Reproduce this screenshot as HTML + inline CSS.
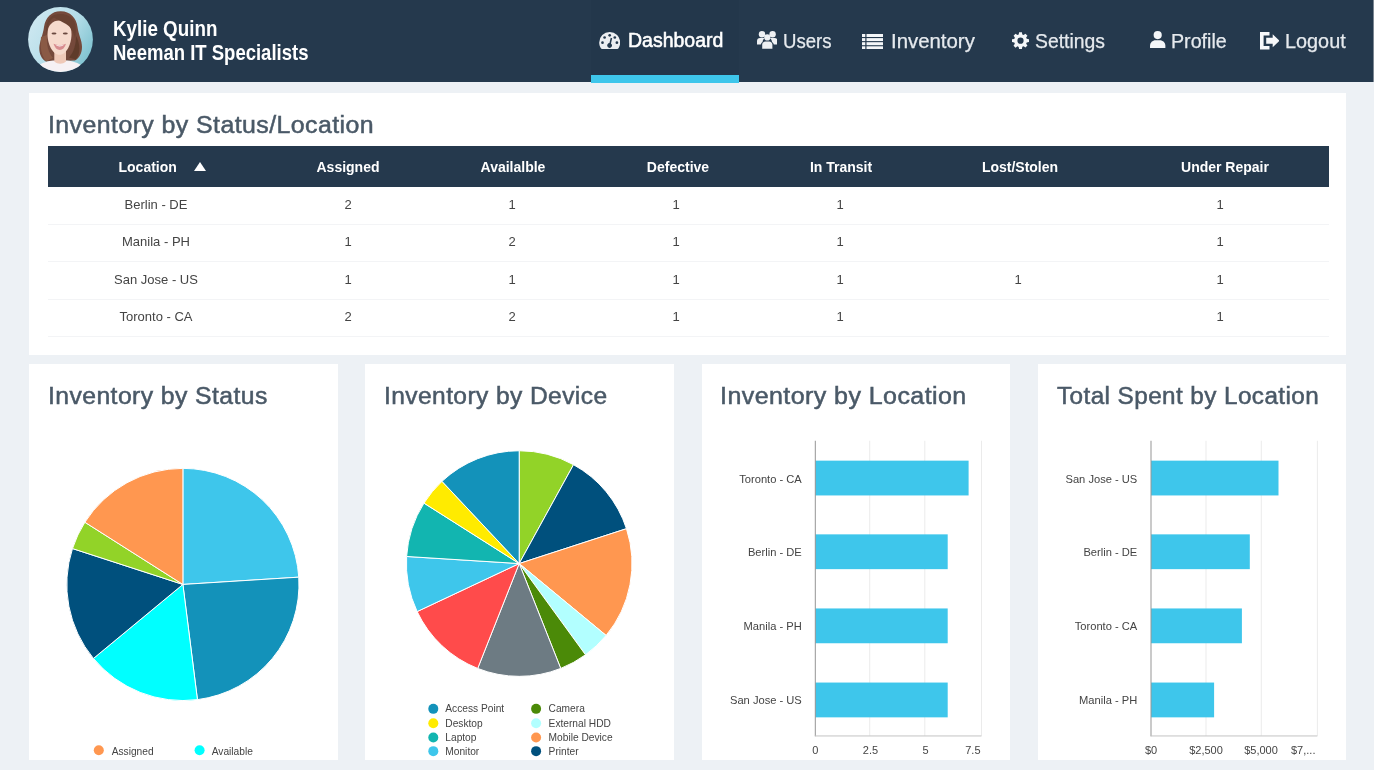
<!DOCTYPE html>
<html lang="en">
<head>
<meta charset="utf-8">
<title>Dashboard - Inventory</title>
<style>
*{box-sizing:border-box;margin:0;padding:0}
html,body{width:1374px;height:770px;overflow:hidden}
body{background:#edf1f5;font-family:"Liberation Sans",Arial,sans-serif;position:relative;color:#444}
#wrap{position:absolute;left:0;top:0;width:1374px;height:770px;will-change:transform}
.abs{position:absolute}
header{position:absolute;left:0;top:0;width:1374px;height:81.5px;background:#25394d}
.avatar{position:absolute;left:28.3px;top:7.1px;width:65px;height:65px}
.uname{position:absolute;left:113.2px;top:16.7px;font-size:21.6px;line-height:24px;font-weight:bold;color:#fff;white-space:nowrap}
.uname span{display:block;transform-origin:0 50%}
nav a{position:absolute;top:0;height:81px;color:#e6eaee;font-size:20.8px;line-height:24px;text-decoration:none;white-space:nowrap}
nav a span{position:absolute;top:28.75px;transform-origin:0 50%;-webkit-text-stroke:0.25px #e6eaee}
nav a svg{position:absolute}
nav a.active{color:#fff;background:#23374b}
nav a.active span{-webkit-text-stroke:0.55px #fff}
.underline{position:absolute;left:591px;top:75px;width:148px;height:8px;background:#3ec6eb}
.card{position:absolute;background:#fff}
.card h2{position:absolute;left:19px;font-size:23.3px;line-height:28px;font-weight:normal;color:#4a5967;white-space:nowrap;letter-spacing:0.4px;-webkit-text-stroke:0.5px #4a5967;transform-origin:0 50%}
table{position:absolute;left:19px;top:53.5px;width:1281px;border-collapse:collapse;table-layout:fixed}
th{background:#25394d;color:#fff;font-size:14px;font-weight:bold;height:41px;text-align:center;vertical-align:middle;white-space:nowrap}
td:last-child{padding-right:5px}
tr.r3 td{height:38px}
td{font-size:13px;color:#444;height:37px;padding-bottom:2px;text-align:center;vertical-align:middle;border-bottom:1px solid #f3f4f6}
.sort{display:inline-block;width:0;height:0;border-left:6.5px solid transparent;border-right:6.5px solid transparent;border-bottom:9px solid #fff;margin-left:17.5px;position:relative;top:-1px}
svg text{font-family:"Liberation Sans",Arial,sans-serif}
</style>
</head>
<body>
<div id="wrap">
<header>
  <svg class="avatar" viewBox="0 0 65 65">
    <defs>
      <clipPath id="av"><circle cx="32.5" cy="32.5" r="32.4"/></clipPath>
      <linearGradient id="avbg" x1="0" y1="0.2" x2="1" y2="0.8">
        <stop offset="0" stop-color="#cfe8f1"/><stop offset="0.55" stop-color="#b3dde8"/><stop offset="1" stop-color="#79bfcd"/>
      </linearGradient>
      <filter id="avb" x="-10%" y="-10%" width="120%" height="120%"><feGaussianBlur stdDeviation="0.55"/></filter>
    </defs>
    <g clip-path="url(#av)">
      <rect width="65" height="65" fill="url(#avbg)"/>
      <g filter="url(#avb)">
        <path d="M33 4.300C24 4 17.500 10 16 20C15 28 11.500 35 11.300 41C11.200 47 13.500 52 18 54.500L47 53.500C51.500 51 54 46 54 40C54 33 50.500 28 49.500 20C48.300 10.500 42 4.600 33 4.300Z" fill="#74493a"/>
        <path d="M13 30C12 40 13 48 18 54.500L25 51C20 45 18.500 38 19 28Z" fill="#8a5a45"/>
        <path d="M5 66C7 59 15 54.500 25 53.500L39 53.500C49 54.500 57 59 60 66Z" fill="#f6f1f4"/>
        <path d="M26.300 44H38V54.500C34.500 57.500 29.800 57.500 26.300 54.500Z" fill="#efc9b8"/>
        <path d="M19.500 27C19.500 18 24.500 13.500 31.500 13.500C38.500 13.500 43.500 18 43.500 27C43.500 37 38.500 47.800 31.500 47.800C24.500 47.800 19.500 37 19.500 27Z" fill="#f6dacd"/>
        <path d="M26 10.500C21.500 13 19.300 19 19 28C17.500 23 17.500 14.500 23.500 9.500C30 5.500 40 6.500 45 12.500C48 16.500 48.500 24 47 31C45.500 25 43 20 38 17C33.500 14.500 29.500 12.500 26 10.500Z" fill="#6a4232"/>
        <path d="M48 29C48 37 46 45 41 50.500L48 52.500C52.500 47 52.500 37 48 29Z" fill="#5f3b2c"/>
        <ellipse cx="26" cy="26.500" rx="2.500" ry="0.900" fill="#6b4a40"/>
        <ellipse cx="37.300" cy="26.500" rx="2.500" ry="0.900" fill="#6b4a40"/>
        <path d="M25.500 36.800Q31.800 39.500 38 36.800Q36 43 31.800 43Q27.500 43 25.500 36.800Z" fill="#d88c8f"/>
        <path d="M27 37.500Q31.800 39.300 36.500 37.500Q31.800 41.500 27 37.500Z" fill="#fffafa"/>
      </g>
    </g>
  </svg>
  <div class="uname"><span style="transform:scaleX(0.870)">Kylie Quinn</span><span style="transform:scaleX(0.857)">Neeman IT Specialists</span></div>
  <nav>
    <a class="active" style="left:591px;width:148px">
      <svg style="left:7.8px;top:32px" width="21.4" height="17" viewBox="0 0 21 17"><path fill="#eceef1" d="M10.5 0A10.5 10.5 0 0 0 0 10.5c0 2 .55 3.900 1.550 5.500.3.600.8 1 1.450 1h15c.65 0 1.150-.4 1.450-1A10.400 10.400 0 0 0 21 10.500 10.500 10.500 0 0 0 10.500 0Z"/><g fill="#25394d"><circle cx="3.300" cy="10.700" r="1.350"/><circle cx="5.400" cy="5.500" r="1.350"/><circle cx="10.500" cy="3.300" r="1.350"/><circle cx="15.600" cy="5.500" r="1.350"/><circle cx="17.700" cy="10.700" r="1.350"/><path d="M11.500 5.800l1.500.4-1.250 5.300a2.400 2.400 0 1 1-1.500-.4z"/></g></svg>
      <span style="left:37.2px;top:28.1px;font-size:19.8px;transform:scaleX(0.985)">Dashboard</span>
    </a>
    <a style="left:750px;width:90px">
      <svg style="left:6.900px;top:30.900px" width="20.600" height="17.700" viewBox="0 0 20.600 17.700"><g fill="#eef0f3"><circle cx="5" cy="3.300" r="3.200"/><circle cx="15.600" cy="3.300" r="3.200"/><path d="M0 13.500V9.900C0 8.100 1.200 6.900 3 6.900h3.300c.5 0 .9.100 1.300.3-1.300 1-2 2.400-2.100 4.100-.9.400-1.500 1.200-1.700 2.200z"/><path d="M20.600 13.500V9.900c0-1.800-1.200-3-3-3h-3.300c-.5 0-.9.100-1.300.3 1.300 1 2 2.400 2.100 4.100.9.400 1.500 1.200 1.700 2.200z"/><circle cx="10.300" cy="6.400" r="3.100"/><path d="M5.200 17.700v-4c0-1.900 1.400-3.300 3.300-3.300h3.600c1.900 0 3.300 1.400 3.300 3.300v4z"/></g></svg>
      <span style="left:33px;transform:scaleX(0.895)">Users</span>
    </a>
    <a style="left:856px;width:125px">
      <svg style="left:6.300px;top:33.500px" width="21" height="15.400" viewBox="0 0 21 15.400"><g fill="#f4f6f8"><rect x="0" y="0" width="3.300" height="3"/><rect x="4.500" y="0" width="16.500" height="3"/><rect x="0" y="4.100" width="3.300" height="3"/><rect x="4.500" y="4.100" width="16.500" height="3"/><rect x="0" y="8.200" width="3.300" height="3"/><rect x="4.500" y="8.200" width="16.500" height="3"/><rect x="0" y="12.300" width="3.300" height="3"/><rect x="4.500" y="12.300" width="16.500" height="3"/></g></svg>
      <span style="left:34.600px;transform:scaleX(0.98)">Inventory</span>
    </a>
    <a style="left:1005px;width:110px">
      <svg style="left:7.200px;top:32px" width="17" height="17.400" viewBox="0 0 17 17"><path fill="#f4f6f8" fill-rule="evenodd" d="M7.100 0h2.800l.4 2.200 1.300.55 1.850-1.300 2 2-1.300 1.850.55 1.300 2.300.4v2.800l-2.300.4-.55 1.300 1.300 1.850-2 2-1.850-1.300-1.300.55L9.900 17H7.100l-.4-2.300-1.300-.55-1.850 1.300-2-2 1.300-1.850-.55-1.300L0 9.900V7.100l2.300-.4.55-1.300-1.300-1.850 2-2 1.850 1.300 1.300-.55zM8.500 5.400a3.100 3.100 0 1 0 0 6.200 3.100 3.100 0 0 0 0-6.200z"/></svg>
      <span style="left:29.900px;transform:scaleX(0.931)">Settings</span>
    </a>
    <a style="left:1143px;width:90px">
      <svg style="left:7.400px;top:30.800px" width="15.400" height="17.400" viewBox="0 0 15 17"><g fill="#f4f6f8"><circle cx="7.500" cy="4" r="4"/><path d="M0 17v-2.600C0 11.300 2.400 9 5.500 9h4c3.100 0 5.500 2.300 5.500 5.400V17z"/></g></svg>
      <span style="left:28.300px;transform:scaleX(0.946)">Profile</span>
    </a>
    <a style="left:1252px;width:100px">
      <svg style="left:7.500px;top:32px" width="19.400" height="17.500" viewBox="0 0 19.400 17.500"><g fill="#f7f8fa"><path d="M0 0h9.500v3.500H3.600v10.500h5.900v3.500H0z"/><path d="M12.700 2.300l6.700 6.450-6.700 6.450v-3.500H6.200V5.800h6.500z"/></g></svg>
      <span style="left:32.800px;transform:scaleX(0.954)">Logout</span>
    </a>
  </nav>
  <div class="underline"></div>
  <div class="abs" style="left:1372.7px;top:0;width:1.3px;height:81.5px;background:#7c8792"></div>
</header>

<section class="card" style="left:29px;top:92.500px;width:1317px;height:262px">
  <h2 style="top:18.5px;left:19.1px;transform:scaleX(1.0686)">Inventory by Status/Location</h2>
  <table>
    <colgroup><col style="width:216px"><col style="width:168px"><col style="width:160px"><col style="width:168px"><col style="width:160px"><col style="width:196px"><col style="width:213px"></colgroup>
    <thead><tr><th style="text-align:left;padding-left:70.5px">Location<i class="sort"></i></th><th>Assigned</th><th><span style="position:relative;left:1px">Availalble</span></th><th><span style="position:relative;left:2px">Defective</span></th><th><span style="position:relative;left:1px">In Transit</span></th><th><span style="position:relative;left:2px">Lost/Stolen</span></th><th><span style="position:relative;left:2.5px">Under Repair</span></th></tr></thead>
    <tbody>
      <tr><td>Berlin - DE</td><td>2</td><td>1</td><td>1</td><td>1</td><td></td><td>1</td></tr>
      <tr><td>Manila - PH</td><td>1</td><td>2</td><td>1</td><td>1</td><td></td><td>1</td></tr>
      <tr class="r3"><td>San Jose - US</td><td>1</td><td>1</td><td>1</td><td>1</td><td>1</td><td>1</td></tr>
      <tr><td>Toronto - CA</td><td>2</td><td>2</td><td>1</td><td>1</td><td></td><td>1</td></tr>
    </tbody>
  </table>
</section>
<!--charts-->
<section class="card" style="left:29px;top:364.25px;width:308.5px;height:395.5px;overflow:hidden">
  <h2 style="top:17.75px;left:18.5px;transform:scaleX(1.0614)">Inventory by Status</h2>
  <svg class="abs" style="left:0;top:0" width="308.5" height="395.5" viewBox="29 364.25 308.5 395.5">
      <path d="M182.9 584.7L182.9 468.6A116.1 116.1 0 0 1 298.77 577.41Z" fill="#3ec6eb" stroke="#fff" stroke-width="1"/>
      <path d="M182.9 584.7L298.77 577.41A116.1 116.1 0 0 1 197.45 699.88Z" fill="#1392ba" stroke="#fff" stroke-width="1"/>
      <path d="M182.9 584.7L197.45 699.88A116.1 116.1 0 0 1 93.44 658.7Z" fill="#00ffff" stroke="#fff" stroke-width="1"/>
      <path d="M182.9 584.7L93.44 658.7A116.1 116.1 0 0 1 72.48 548.82Z" fill="#00507d" stroke="#fff" stroke-width="1"/>
      <path d="M182.9 584.7L72.48 548.82A116.1 116.1 0 0 1 84.87 522.49Z" fill="#92d328" stroke="#fff" stroke-width="1"/>
      <path d="M182.9 584.7L84.87 522.49A116.1 116.1 0 0 1 182.9 468.6Z" fill="#ff9750" stroke="#fff" stroke-width="1"/>
      <circle cx="98.8" cy="750.5" r="5" fill="#ff9750"/><text x="111.7" y="755.6" font-size="10.2" fill="#444">Assigned</text>
      <circle cx="199.6" cy="750.5" r="5" fill="#00ffff"/><text x="211.7" y="755.6" font-size="10.2" fill="#444">Available</text>
  </svg>
</section>
<section class="card" style="left:365px;top:364.25px;width:309px;height:395.5px;overflow:hidden">
  <h2 style="top:17.75px;left:18.51px;transform:scaleX(1.0533)">Inventory by Device</h2>
  <svg class="abs" style="left:0;top:0" width="309" height="395.5" viewBox="365 364.25 309 395.5">
      <path d="M519.2 563.8L519.2 451A112.8 112.8 0 0 1 573.54 464.95Z" fill="#92d328" stroke="#fff" stroke-width="1"/>
      <path d="M519.2 563.8L573.54 464.95A112.8 112.8 0 0 1 626.48 528.94Z" fill="#00507d" stroke="#fff" stroke-width="1"/>
      <path d="M519.2 563.8L626.48 528.94A112.8 112.8 0 0 1 606.11 635.7Z" fill="#ff9750" stroke="#fff" stroke-width="1"/>
      <path d="M519.2 563.8L606.11 635.7A112.8 112.8 0 0 1 585.5 655.06Z" fill="#b2ffff" stroke="#fff" stroke-width="1"/>
      <path d="M519.2 563.8L585.5 655.06A112.8 112.8 0 0 1 560.72 668.68Z" fill="#4b8a08" stroke="#fff" stroke-width="1"/>
      <path d="M519.2 563.8L560.72 668.68A112.8 112.8 0 0 1 477.68 668.68Z" fill="#6d7b83" stroke="#fff" stroke-width="1"/>
      <path d="M519.2 563.8L477.68 668.68A112.8 112.8 0 0 1 417.14 611.83Z" fill="#ff4b4b" stroke="#fff" stroke-width="1"/>
      <path d="M519.2 563.8L417.14 611.83A112.8 112.8 0 0 1 406.62 556.72Z" fill="#3ec6eb" stroke="#fff" stroke-width="1"/>
      <path d="M519.2 563.8L406.62 556.72A112.8 112.8 0 0 1 423.96 503.36Z" fill="#12b5b0" stroke="#fff" stroke-width="1"/>
      <path d="M519.2 563.8L423.96 503.36A112.8 112.8 0 0 1 441.98 481.57Z" fill="#ffeb00" stroke="#fff" stroke-width="1"/>
      <path d="M519.2 563.8L441.98 481.57A112.8 112.8 0 0 1 519.2 451Z" fill="#1392ba" stroke="#fff" stroke-width="1"/>
      <circle cx="433.3" cy="709.1" r="5" fill="#1392ba"/><text x="445.3" y="712.6" font-size="10.2" fill="#444">Access Point</text>
      <circle cx="433.3" cy="723.5" r="5" fill="#ffeb00"/><text x="445.3" y="727" font-size="10.2" fill="#444">Desktop</text>
      <circle cx="433.3" cy="737.8" r="5" fill="#12b5b0"/><text x="445.3" y="741.1" font-size="10.2" fill="#444">Laptop</text>
      <circle cx="433.3" cy="751.4" r="5" fill="#3ec6eb"/><text x="445.3" y="755.5" font-size="10.2" fill="#444">Monitor</text>
      <circle cx="536.1" cy="709.1" r="5" fill="#4b8a08"/><text x="548.6" y="712.6" font-size="10.2" fill="#444">Camera</text>
      <circle cx="536.1" cy="723.5" r="5" fill="#b2ffff"/><text x="548.6" y="727" font-size="10.2" fill="#444">External HDD</text>
      <circle cx="536.1" cy="737.8" r="5" fill="#ff9750"/><text x="548.6" y="741.1" font-size="10.2" fill="#444">Mobile Device</text>
      <circle cx="536.1" cy="751.4" r="5" fill="#00507d"/><text x="548.6" y="755.5" font-size="10.2" fill="#444">Printer</text>
  </svg>
</section>
<section class="card" style="left:702px;top:364.25px;width:307.5px;height:395.5px;overflow:hidden">
  <h2 style="top:17.75px;left:17.72px;transform:scaleX(1.0733)">Inventory by Location</h2>
  <svg class="abs" style="left:0;top:0" width="307.5" height="395.5" viewBox="702 364.25 307.5 395.5">
      <rect x="869.2" y="441" width="1" height="295" fill="#ebebeb"/>
      <rect x="924.3" y="441" width="1" height="295" fill="#ebebeb"/>
      <rect x="981" y="441" width="1" height="295" fill="#ebebeb"/>
      <rect x="815.3" y="460.9" width="153.3" height="34.8" fill="#3ec6eb"/>
      <text x="801.8" y="483.3" font-size="11.15" fill="#444" text-anchor="end">Toronto - CA</text>
      <rect x="815.3" y="534.6" width="132.4" height="34.8" fill="#3ec6eb"/>
      <text x="801.8" y="556.3" font-size="11.15" fill="#444" text-anchor="end">Berlin - DE</text>
      <rect x="815.3" y="608.7" width="132.4" height="34.8" fill="#3ec6eb"/>
      <text x="801.8" y="630.4" font-size="11.15" fill="#444" text-anchor="end">Manila - PH</text>
      <rect x="815.3" y="682.8" width="132.4" height="34.8" fill="#3ec6eb"/>
      <text x="801.8" y="704.5" font-size="11.15" fill="#444" text-anchor="end">San Jose - US</text>
      <rect x="814.8" y="441" width="1" height="295.5" fill="#959595"/>
      <rect x="814.8" y="735.7" width="166.7" height="1" fill="#c4c4c4"/>
      <text x="815.4" y="754.1" font-size="11" fill="#444" text-anchor="middle">0</text>
      <text x="870.5" y="754.1" font-size="11" fill="#444" text-anchor="middle">2.5</text>
      <text x="925.5" y="754.1" font-size="11" fill="#444" text-anchor="middle">5</text>
      <text x="980.5" y="754.1" font-size="11" fill="#444" text-anchor="end">7.5</text>
  </svg>
</section>
<section class="card" style="left:1038px;top:364.25px;width:308px;height:395.5px;overflow:hidden">
  <h2 style="top:17.75px;left:19.08px;transform:scaleX(1.0429)">Total Spent by Location</h2>
  <svg class="abs" style="left:0;top:0" width="308" height="395.5" viewBox="1038 364.25 308 395.5">
      <rect x="1205.5" y="441" width="1" height="295" fill="#ebebeb"/>
      <rect x="1260.8" y="441" width="1" height="295" fill="#ebebeb"/>
      <rect x="1316.9" y="441" width="1" height="295" fill="#ebebeb"/>
      <rect x="1151" y="460.9" width="127.5" height="34.8" fill="#3ec6eb"/>
      <text x="1137.3" y="483.3" font-size="11.15" fill="#444" text-anchor="end">San Jose - US</text>
      <rect x="1151" y="534.6" width="98.8" height="34.8" fill="#3ec6eb"/>
      <text x="1137.3" y="556.3" font-size="11.15" fill="#444" text-anchor="end">Berlin - DE</text>
      <rect x="1151" y="608.7" width="90.9" height="34.8" fill="#3ec6eb"/>
      <text x="1137.3" y="630.4" font-size="11.15" fill="#444" text-anchor="end">Toronto - CA</text>
      <rect x="1151" y="682.8" width="63.1" height="34.8" fill="#3ec6eb"/>
      <text x="1137.3" y="704.5" font-size="11.15" fill="#444" text-anchor="end">Manila - PH</text>
      <rect x="1150.5" y="441" width="1" height="295.5" fill="#959595"/>
      <rect x="1150.5" y="735.7" width="166.9" height="1" fill="#c4c4c4"/>
      <text x="1151" y="754.1" font-size="11" fill="#444" text-anchor="middle">$0</text>
      <text x="1206" y="754.1" font-size="11" fill="#444" text-anchor="middle">$2,500</text>
      <text x="1261" y="754.1" font-size="11" fill="#444" text-anchor="middle">$5,000</text>
      <text x="1291" y="754.1" font-size="11" fill="#444" text-anchor="start">$7,...</text>
  </svg>
</section>
<!--/charts-->
</div>
</body>
</html>
